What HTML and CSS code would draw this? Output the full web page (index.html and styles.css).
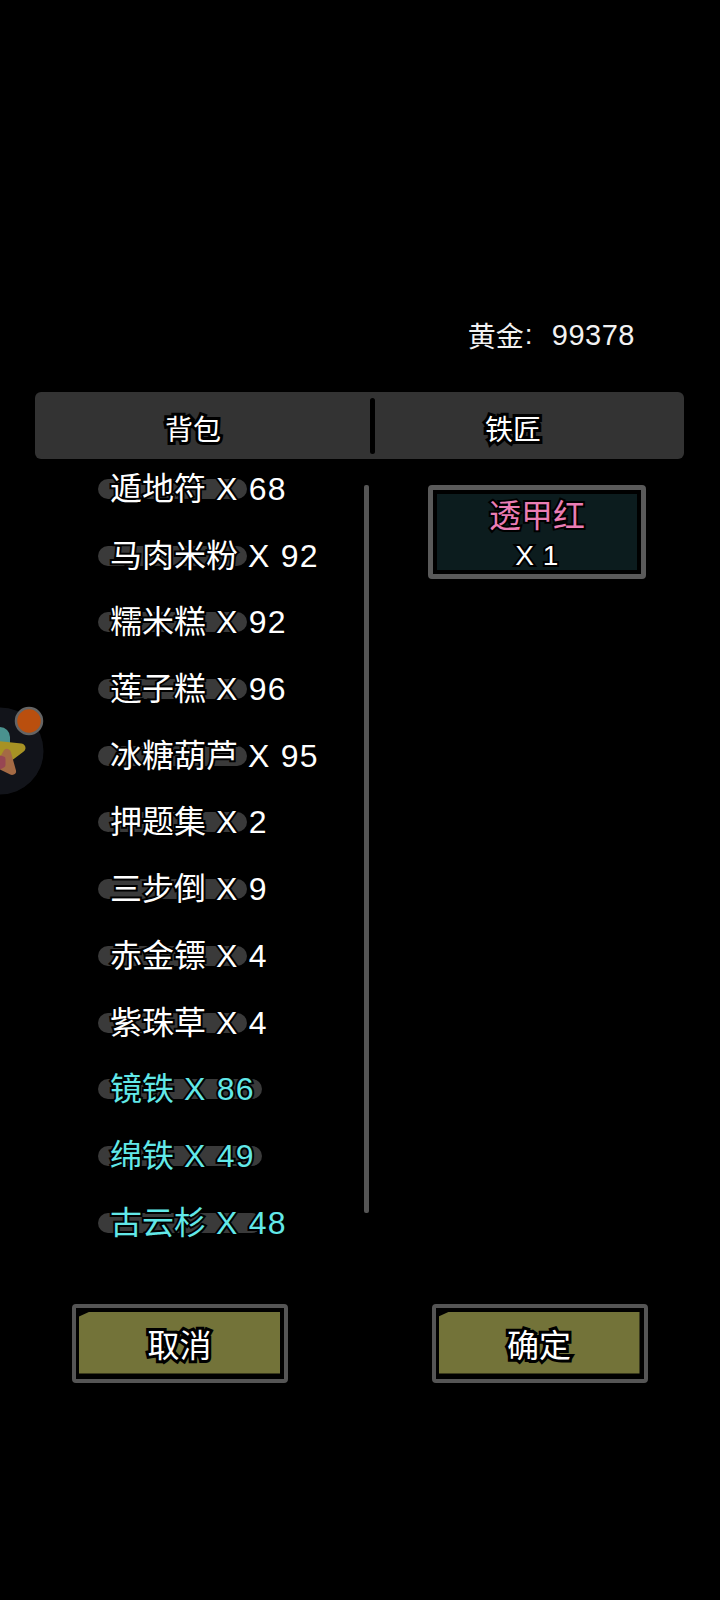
FILE: index.html
```html
<!DOCTYPE html>
<html lang="zh-CN">
<head>
<meta charset="utf-8">
<title>铁匠</title>
<link rel="stylesheet" href="styles.css">
</head>
<body>
<div class="page">
  <div class="gold"><span>黄金</span><span class="colon">:</span><span class="gold-num">99378</span></div>
  <div class="tabs">
    <div class="tab tab-left"><span>背包</span></div>
    <div class="tab-sep"></div>
    <div class="tab tab-right"><span>铁匠</span></div>
  </div>
  <div class="main">
    <ul class="list">
      <li class="row"><span class="item">遁地符 <span class="qty">X 68</span></span></li>
      <li class="row"><span class="item">马肉米粉 <span class="qty">X 92</span></span></li>
      <li class="row"><span class="item">糯米糕 <span class="qty">X 92</span></span></li>
      <li class="row"><span class="item">莲子糕 <span class="qty">X 96</span></span></li>
      <li class="row"><span class="item">冰糖葫芦 <span class="qty">X 95</span></span></li>
      <li class="row"><span class="item">押题集 <span class="qty">X 2</span></span></li>
      <li class="row"><span class="item">三步倒 <span class="qty">X 9</span></span></li>
      <li class="row"><span class="item">赤金镖 <span class="qty">X 4</span></span></li>
      <li class="row"><span class="item">紫珠草 <span class="qty">X 4</span></span></li>
      <li class="row"><span class="item rare">镜铁 <span class="qty">X 86</span></span></li>
      <li class="row"><span class="item rare">绵铁 <span class="qty">X 49</span></span></li>
      <li class="row"><span class="item rare">古云杉 <span class="qty">X 48</span></span></li>
    </ul>
    <div class="scrollbar"></div>
    <div class="smith">
      <div class="card">
        <div class="card-name">透甲红</div>
        <div class="card-count">X 1</div>
      </div>
    </div>
  </div>
  <div class="actions">
    <div class="btn"><div class="btn-face">取消</div></div>
    <div class="btn"><div class="btn-face">确定</div></div>
  </div>
  <div class="float-ball">
    <svg class="ball-svg" width="90" height="104" viewBox="0 0 90 104" aria-hidden="true">
      <circle cx="44" cy="60" r="43.5" fill="#14161c"/>
      <g stroke-linecap="round" stroke-linejoin="round">
        <path d="M44 46 L44 54" stroke="#4f9a96" stroke-width="20" fill="none"/>
        <polygon points="38,54 65,57 45,72" fill="#b09a26" stroke="#b09a26" stroke-width="9"/>
        <polygon points="51,62 56,80 44,74" fill="#ad7048" stroke="#ad7048" stroke-width="8"/>
        <polygon points="40,66 47,68 47,74 40,78" fill="#a04a58" stroke="#a04a58" stroke-width="5"/>
      </g>
      <circle cx="73" cy="30" r="13" fill="#c4540f" stroke="#6a6a6a" stroke-width="2.5"/>
    </svg>
  </div>
</div>
</body>
</html>
```
FILE: styles.css
```css
* { box-sizing: border-box; }
html, body { margin: 0; padding: 0; background: #000; }
.page {
  position: relative;
  width: 720px;
  height: 1600px;
  overflow: hidden;
  background: #000;
  color: #fff;
  font-family: "Liberation Sans", "Noto Sans CJK SC", sans-serif;
  padding-top: 313px;
}
.gold {
  display: flex;
  justify-content: flex-end;
  align-items: center;
  height: 44px;
  padding-right: 85px;
  font-size: 28px;
  color: #f2f2f2;
}
.colon { width: 28px; padding-left: 1px; }
.gold-num { font-size: 29px; letter-spacing: 0.5px; }
.tabs {
  display: flex;
  width: 649px;
  height: 67px;
  margin: 35px 0 0 35px;
  background: #333;
  border-radius: 6px;
  align-items: center;
  font-size: 28px;
}
.tab {
  height: 100%;
  display: flex;
  align-items: center;
  padding-top: 4px;
}
.tab span { -webkit-text-stroke: 6px #000; paint-order: stroke fill; }
.tab-left { width: 335px; padding-left: 130px; }
.tab-sep { width: 5px; height: 56px; background: #000; border-radius: 3px; }
.tab-right { flex: 1; padding-left: 110px; }
.main {
  display: flex;
  align-items: flex-start;
}
.list {
  list-style: none;
  margin: 0;
  padding: 0 0 0 98px;
  width: 364px;
  display: flex;
  flex-direction: column;
  gap: 8.7px;
}
.row { height: 58px; display: flex; align-items: flex-start; }
.item {
  position: relative;
  padding: 10px 0 0 12px;
  font-size: 32px;
  line-height: 40px;
  white-space: nowrap;
  isolation: isolate;
  -webkit-text-stroke: 4px #000;
  paint-order: stroke fill;
}
.qty { letter-spacing: 1.25px; margin-left: 1px; }
.item::before {
  content: "";
  position: absolute;
  left: 0;
  width: 149px;
  top: 20px;
  height: 20px;
  border-radius: 10px;
  background: #3a3a3a;
  z-index: -1;
}
.rare { color: #62e8e8; }
.rare::before { width: 164px; }
.scrollbar {
  width: 5px;
  height: 728px;
  margin-top: 26px;
  background: #555;
  border-radius: 2px;
}
.smith { margin: 26px 0 0 59px; }
.card {
  width: 218px;
  height: 94px;
  border: 5px solid #5a5a5a;
  border-radius: 4px;
  background: #0c1c1e;
  box-shadow: inset 0 0 0 4px #000;
  display: flex;
  flex-direction: column;
  align-items: center;
  padding-top: 7px;
}
.card-name {
  font-size: 32px;
  line-height: 39px;
  color: #ea7db4;
  -webkit-text-stroke: 4px #000;
  paint-order: stroke fill;
}
.card-count {
  font-size: 28px;
  line-height: 39px;
  letter-spacing: 0.5px;
  -webkit-text-stroke: 4px #000;
  paint-order: stroke fill;
}
.actions {
  display: flex;
  gap: 143.5px;
  margin: 53px 0 0 72px;
}
.btn {
  width: 216px;
  height: 79px;
  border: 4px solid #555;
  border-radius: 4px;
  background: #000;
  padding: 4px 4px 5px 3px;
}
.btn-face {
  height: 100%;
  background: #737339;
  clip-path: polygon(11px 0, 100% 0, 100% 100%, 0 100%, 0 5px);
  display: flex;
  align-items: center;
  justify-content: center;
  font-size: 32px;
  -webkit-text-stroke: 6px #000;
  paint-order: stroke fill;
}
.float-ball {
  position: absolute;
  left: -44px;
  top: 691px;
  opacity: .95;
}
.ball-svg { display: block; }
```
